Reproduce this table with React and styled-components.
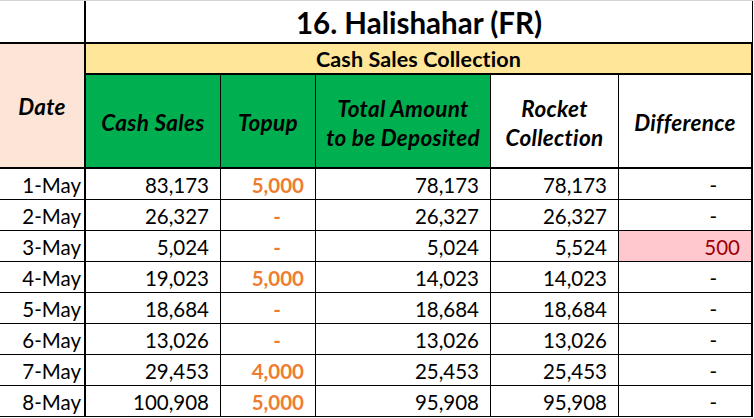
import React from "react";
import styled, { createGlobalStyle, css } from "styled-components";

const Global = createGlobalStyle`
  html, body { margin: 0; padding: 0; background: #ffffff; }
  body { font-family: Lato, "Liberation Sans", sans-serif; color: #000; }
`;

const Sheet = styled.div`
  display: grid;
  grid-template-columns: 86px 135px 95px 175px 128px 134px;
  grid-template-rows: 43px 31px 94px repeat(8, 31px);
  width: 753px;
  border-top: 1px solid #d4d4d4;
`;

const Cell = styled.div`
  box-sizing: border-box;
  display: flex;
  align-items: center;
  border-bottom: ${(p) => p.$bottom || 1}px solid #000;
  border-right: ${(p) => (p.$right === 0 ? "none" : `${p.$right || 1}px solid #000`)};
  grid-column: ${(p) => p.$col || "auto"};
  grid-row: ${(p) => p.$row || "auto"};
  background: ${(p) => p.$bg || "#ffffff"};
  overflow: hidden;
  white-space: nowrap;
`;

const Corner = styled(Cell)``;

const Title = styled(Cell)`
  justify-content: center;
  font-weight: 700;
  font-size: 29.5px;
  padding-top: 2px;
`;

const Band = styled(Cell)`
  justify-content: center;
  font-weight: 700;
  font-size: 21.5px;
  letter-spacing: 0.1px;
`;

const Head = styled(Cell)`
  justify-content: center;
  text-align: center;
  font-weight: 700;
  font-style: italic;
  font-size: 22.5px;
  letter-spacing: 0.3px;
  line-height: 29px;
  white-space: normal;
  padding-top: ${(p) => p.$pt || 0}px;
`;

const Data = styled(Cell)`
  justify-content: flex-end;
  font-size: 20.5px;
  padding-right: ${(p) => (p.$dash ? 34 : 11)}px;
  padding-top: 1px;
  ${(p) =>
    p.$orange &&
    css`
      color: #ed7d31;
      font-weight: 700;
    `}
  ${(p) =>
    p.$alert &&
    css`
      color: #9c0006;
    `}
`;

const DateCell = styled(Data)`
  padding-right: 3px;
`;

const rows = [
  ["1-May", "83,173", "5,000", "78,173", "78,173", "-"],
  ["2-May", "26,327", "-", "26,327", "26,327", "-"],
  ["3-May", "5,024", "-", "5,024", "5,524", "500"],
  ["4-May", "19,023", "5,000", "14,023", "14,023", "-"],
  ["5-May", "18,684", "-", "18,684", "18,684", "-"],
  ["6-May", "13,026", "-", "13,026", "13,026", "-"],
  ["7-May", "29,453", "4,000", "25,453", "25,453", "-"],
  ["8-May", "100,908", "5,000", "95,908", "95,908", "-"],
];

export default function App() {
  return (
    <>
      <Global />
      <Sheet>
        <Corner $col="1" $row="1" $right={2} $bottom={2} />
        <Title $col="2 / 7" $row="1" $right={1} $bottom={2}>
          16. Halishahar (FR)
        </Title>
        <Head $col="1" $row="2 / 4" $right={2} $bottom={2} $bg="#fce4d6" $pt={2}>
          Date
        </Head>
        <Band $col="2 / 7" $row="2" $right={2} $bottom={2} $bg="#ffe699">
          Cash Sales Collection
        </Band>
        <Head $col="2" $row="3" $bottom={2} $bg="#00b050" $pt={2}>
          Cash Sales
        </Head>
        <Head $col="3" $row="3" $bottom={2} $bg="#00b050" $pt={2}>
          Topup
        </Head>
        <Head $col="4" $row="3" $bottom={2} $bg="#00b050" $pt={4}>
          Total Amount
          <br />
          to be Deposited
        </Head>
        <Head $col="5" $row="3" $bottom={2} $pt={4}>
          Rocket
          <br />
          Collection
        </Head>
        <Head $col="6" $row="3" $right={2} $bottom={2} $pt={2}>
          Difference
        </Head>
        {rows.map((r) => (
          <React.Fragment key={r[0]}>
            <DateCell $right={2}>{r[0]}</DateCell>
            <Data>{r[1]}</Data>
            <Data $orange $dash={r[2] === "-"}>
              {r[2]}
            </Data>
            <Data>{r[3]}</Data>
            <Data>{r[4]}</Data>
            <Data
              $right={2}
              $dash={r[5] === "-"}
              $alert={r[5] !== "-"}
              $bg={r[5] !== "-" ? "#ffc7ce" : undefined}
            >
              {r[5]}
            </Data>
          </React.Fragment>
        ))}
      </Sheet>
    </>
  );
}
